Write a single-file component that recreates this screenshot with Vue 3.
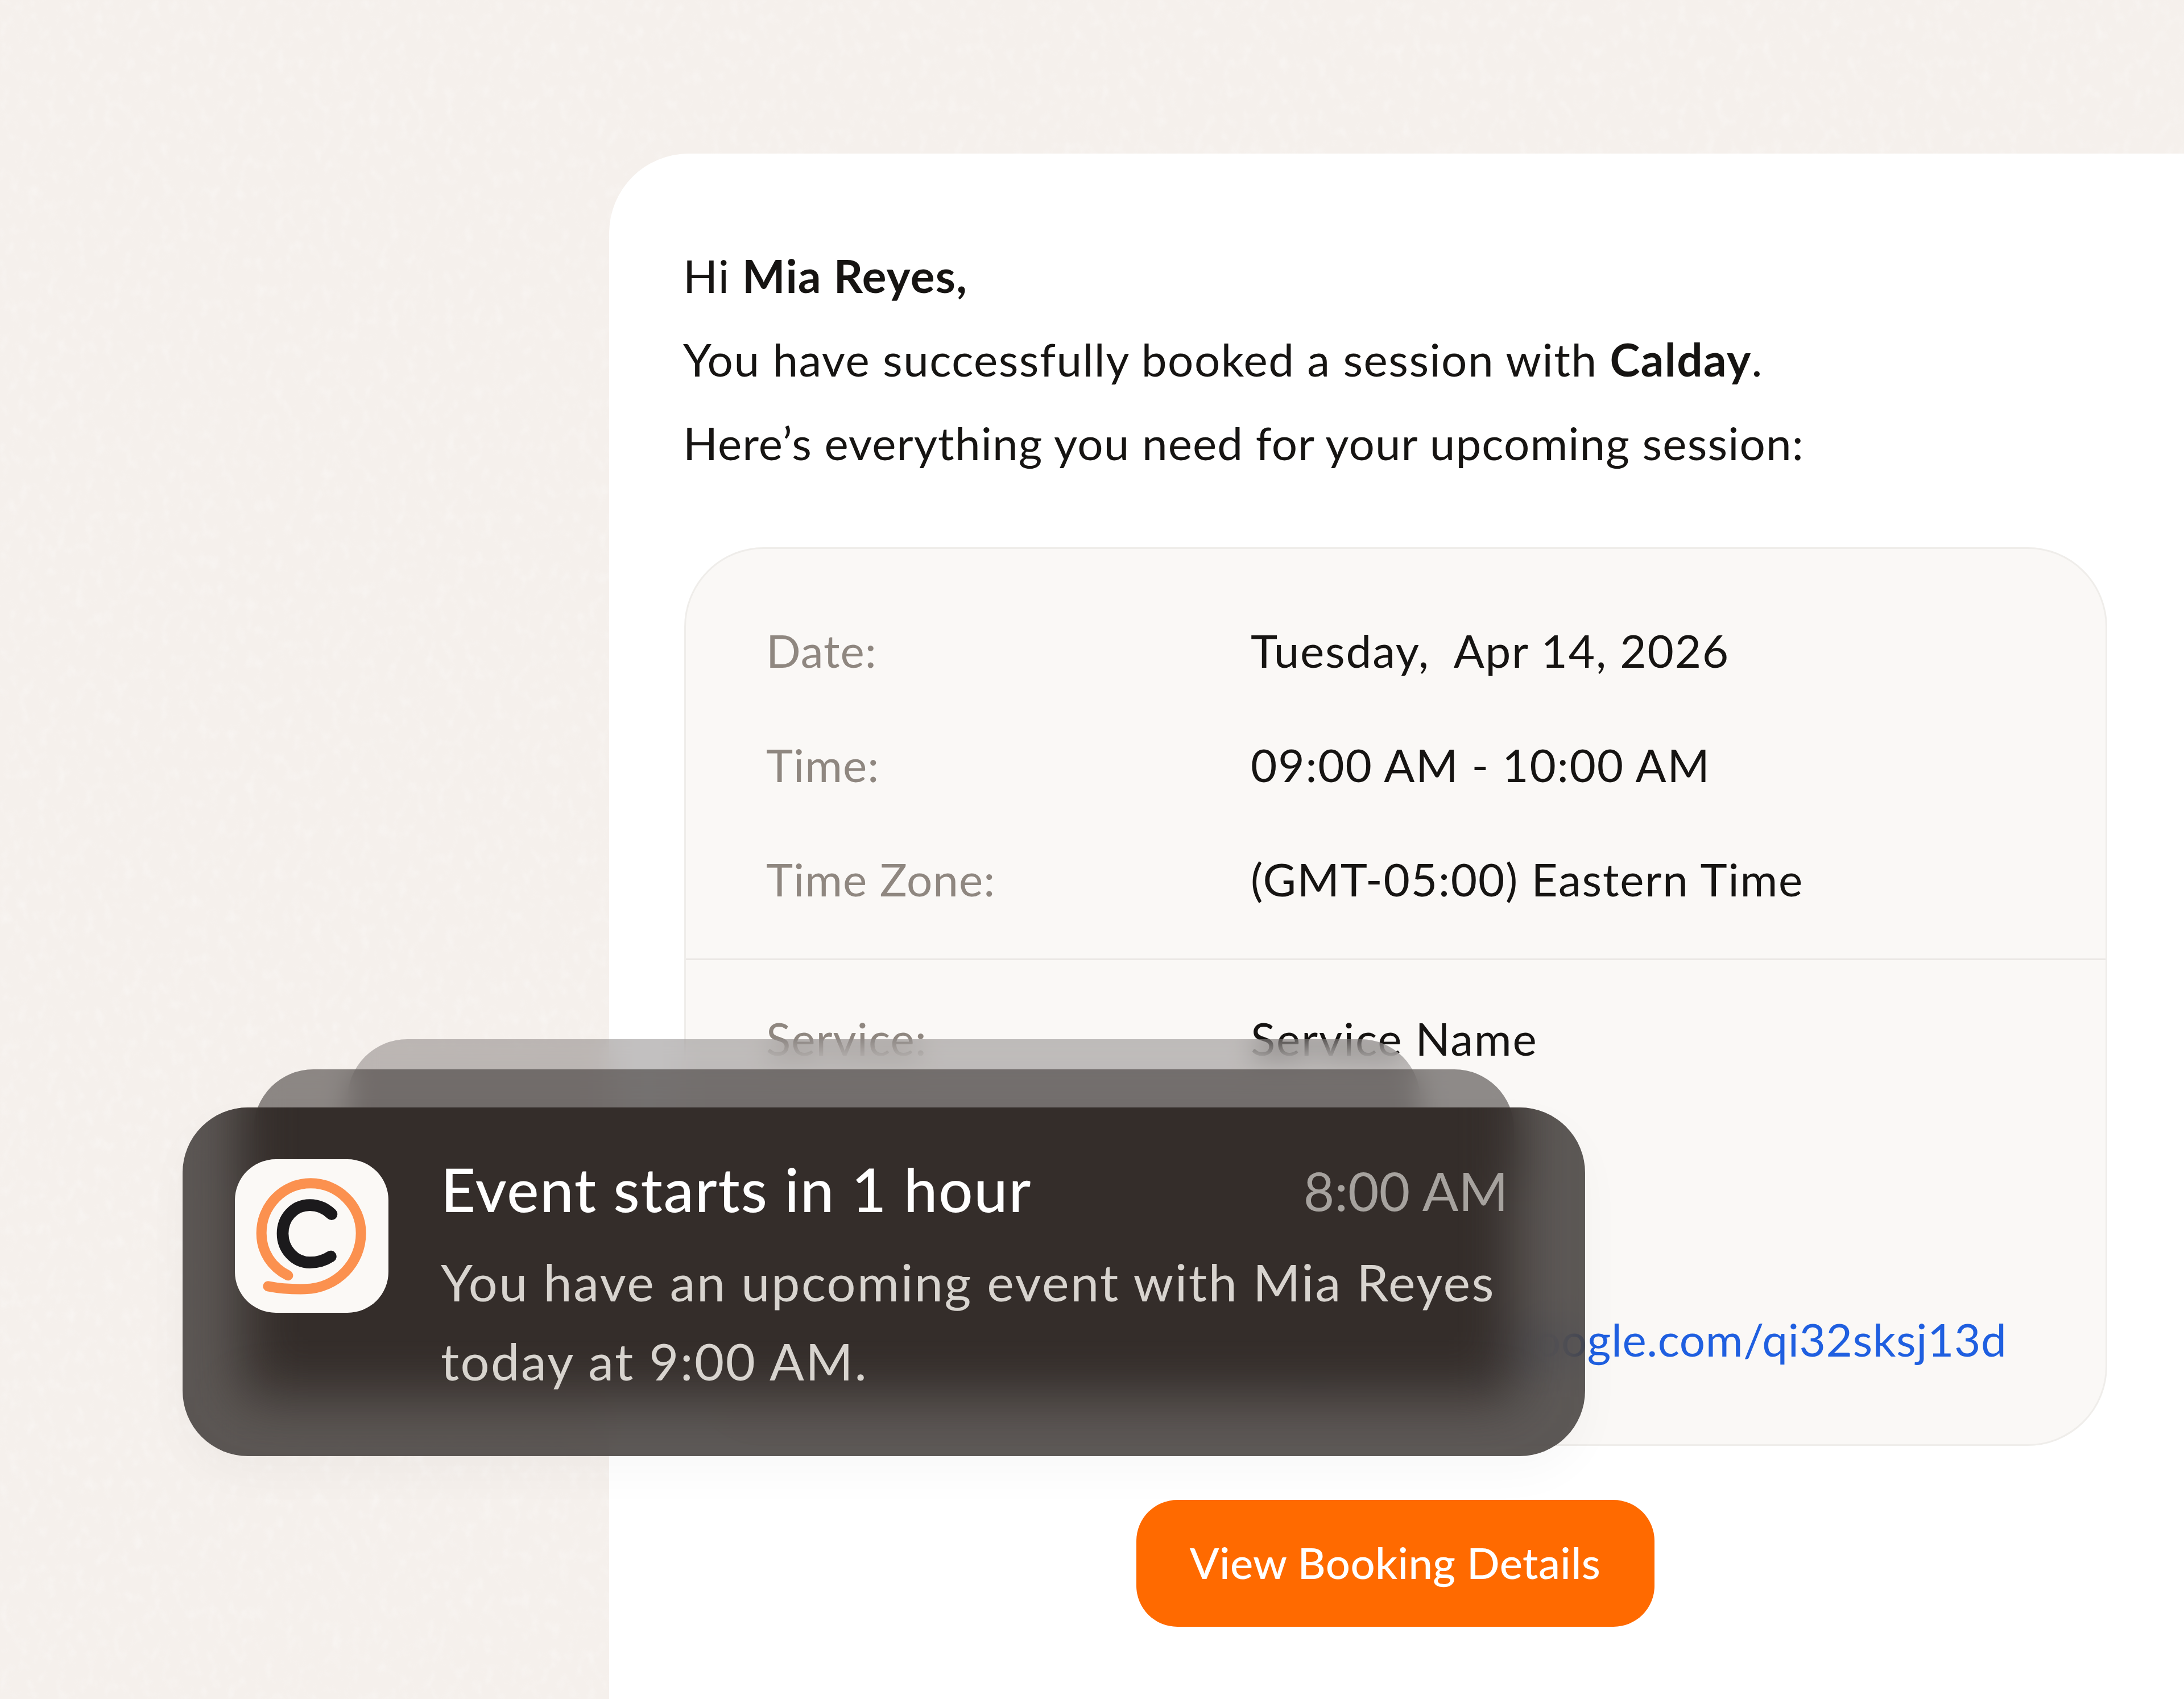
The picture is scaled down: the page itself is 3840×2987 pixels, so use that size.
<script setup>
const topRows = [
  { label: 'Date:', value: 'Tuesday,  Apr 14, 2026' },
  { label: 'Time:', value: '09:00 AM - 10:00 AM' },
  { label: 'Time Zone:', value: '(GMT-05:00) Eastern Time' },
]
</script>

<template>
  <div class="page">
    <svg class="grain" width="3840" height="2987" aria-hidden="true">
      <filter id="speck" x="0" y="0" width="100%" height="100%">
        <feTurbulence type="fractalNoise" baseFrequency="0.06 0.04" numOctaves="3" seed="7" />
        <feColorMatrix type="matrix" values="0 0 0 0 1  0 0 0 0 1  0 0 0 0 1  2.6 0 0 0 -1.32" />
        <feGaussianBlur stdDeviation="1.5" />
      </filter>
      <rect width="3840" height="2987" filter="url(#speck)" opacity="0.28" />
    </svg>

    <main class="card">
      <p class="line">Hi <b>Mia Reyes,</b></p>
      <p class="line wide">You have successfully booked a session with <b>Calday</b>.</p>
      <p class="line tight">Here’s everything you need for your upcoming session:</p>

      <section class="panel">
        <div class="group first">
          <div v-for="r in topRows" :key="r.label" class="row">
            <span class="label">{{ r.label }}</span>
            <span class="value">{{ r.value }}</span>
          </div>
        </div>
        <div class="group second">
          <div class="row">
            <span class="label">Service:</span>
            <span class="value">Service Name</span>
          </div>
          <div class="row link-row">
            <span class="label">Link:</span>
            <span class="value link">https://meet.google.com/qi32sksj13d</span>
          </div>
        </div>
      </section>

      <div class="actions">
        <a class="button">View Booking Details</a>
      </div>
    </main>

    <div class="stack">
      <div class="layer back"></div>
      <div class="layer mid"></div>
      <div class="toast">
        <div class="icon">
          <svg viewBox="0 0 810 810" width="270" height="270" fill="none" stroke-linecap="round">
            <g transform="translate(-100 -115)">
              <path d="M275 785 Q360 802 470 800 C640 795 765 660 765 505 C765 360 645 242 500 242 C355 242 240 360 240 505 C240 605 295 685 380 728" stroke="#fb914f" stroke-width="54" />
              <path d="M610 405 C580 375 540 357 495 357 C410 357 352 425 352 507 C352 590 415 660 495 660 C540 660 575 648 605 628" stroke="#1b1a1c" stroke-width="62" />
            </g>
          </svg>
        </div>
        <div class="content">
          <div class="head">
            <span class="title">Event starts in 1 hour</span>
            <span class="time">8:00 AM</span>
          </div>
          <p class="message">You have an upcoming event with Mia Reyes today at 9:00 AM.</p>
        </div>
      </div>
    </div>
  </div>
</template>

<style>
html, body { margin: 0; background: #f5f0ec; }
</style>

<style scoped>
.page {
  position: relative;
  width: 3840px;
  height: 2987px;
  overflow: hidden;
  background: #f5f0ec;
  font-family: Lato, "Noto Sans", sans-serif;
  color: #161412;
  padding: 270px 0 0 1071px;
  box-sizing: border-box;
}
.grain {
  position: absolute;
  left: 0;
  top: 0;
}
.card {
  position: relative;
  width: 2769px;
  height: 2717px;
  background: #fff;
  border-top-left-radius: 140px;
  box-sizing: border-box;
  padding: 141px 135px 0 130px;
}
.line {
  margin: 0;
  font-size: 80px;
  line-height: 147px;
  letter-spacing: 1.3px;
  white-space: pre-wrap;
}
.line.wide { letter-spacing: 1.45px; }
.line.tight { letter-spacing: 1.1px; }
.line b { font-weight: 700; }
.panel {
  margin: 110px 0 0 2px;
  height: 1580px;
  box-sizing: border-box;
  border: 3px solid #efedea;
  border-radius: 140px;
  background: #faf8f6;
}
.group { padding: 0 0 0 141px; }
.first {
  padding-top: 77px;
  padding-bottom: 40px;
  border-bottom: 3px solid #ebe8e5;
}
.second { padding-top: 36px; }
.row {
  display: grid;
  grid-template-columns: 852px 1fr;
  height: 201px;
  align-items: center;
  font-size: 80px;
  white-space: pre-wrap;
}
.label { color: #8f8780; letter-spacing: 1px; }
.value { color: #161412; letter-spacing: 1.8px; }
.link-row { margin-top: 328px; }
.value.link { color: #1f5fe0; letter-spacing: 0.6px; }
.actions { display: flex; justify-content: center; margin-top: 95px; }
.button {
  display: flex;
  align-items: center;
  justify-content: center;
  width: 911px;
  height: 223px;
  padding-bottom: 5px;
  box-sizing: border-box;
  border-radius: 72px;
  background: #ff6a00;
  color: #fff;
  font-size: 76px;
  font-weight: 500;
  letter-spacing: 0.4px;
}

.stack {
  position: absolute;
  left: 321px;
  top: 1827px;
  width: 2466px;
  height: 733px;
}
.layer {
  position: absolute;
  border-radius: 105px 105px 0 0;
  -webkit-backdrop-filter: blur(24px);
  backdrop-filter: blur(24px);
}
.back {
  left: 290px;
  right: 290px;
  top: 0;
  height: 200px;
  background: rgba(53, 48, 45, 0.3);
}
.mid {
  left: 125px;
  right: 125px;
  top: 53px;
  height: 200px;
  background: rgba(53, 48, 45, 0.55);
}
.toast {
  position: absolute;
  left: 0;
  right: 0;
  top: 120px;
  bottom: 0;
  box-sizing: border-box;
  display: flex;
  gap: 92px;
  padding: 91px 135px 0 92px;
  border-radius: 115px;
  overflow: hidden;
  background: rgba(53, 48, 45, 0.8);
  -webkit-backdrop-filter: blur(40px);
  backdrop-filter: blur(40px);
  box-shadow: 0 30px 80px rgba(0, 0, 0, 0.03);
}
.toast::before {
  content: "";
  position: absolute;
  left: 105px;
  right: 125px;
  top: -160px;
  bottom: 104px;
  background: #342d2a;
  filter: blur(48px);
}
.icon {
  position: relative;
  width: 270px;
  height: 270px;
  flex: none;
  border-radius: 72px;
  background: #fbf9f6;
}
.icon svg { display: block; }
.content {
  position: relative;
  flex: 1;
  min-width: 0;
  margin-top: -18px;
}
.head {
  display: flex;
  justify-content: space-between;
  align-items: center;
  height: 140px;
}
.title { font-size: 106px; color: #fff; font-weight: 500; letter-spacing: 1.9px; }
.time { font-size: 94px; color: #a6a29e; letter-spacing: 0.2px; position: relative; top: 2px; }
.message {
  margin: 24px 0 0;
  font-size: 90px;
  line-height: 139px;
  letter-spacing: 2.5px;
  color: #d8d4cf;
}
</style>
